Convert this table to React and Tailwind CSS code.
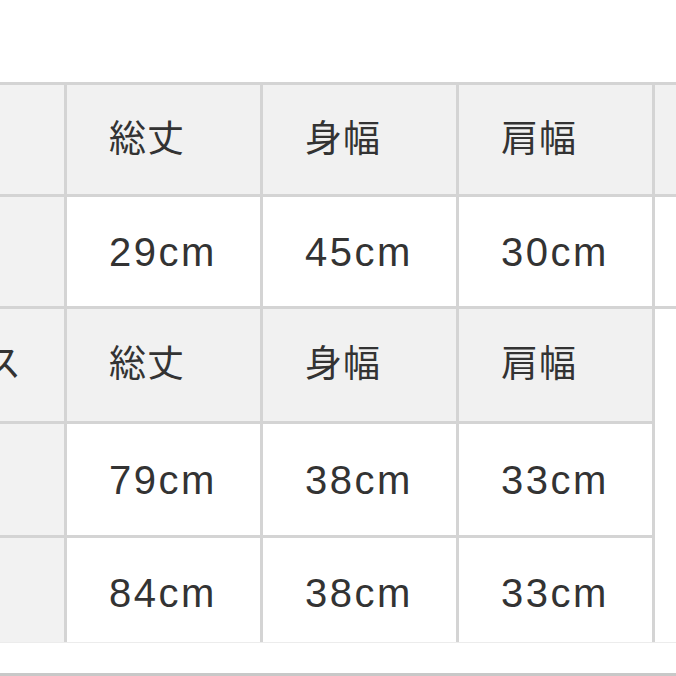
export default function App() {
  const font = { fontFamily: '"Liberation Sans", "Noto Sans CJK JP", sans-serif' };
  const Head = ({ children }) => (
    <div className="bg-[#f1f1f1] flex items-center pl-[42px] text-[37px] tracking-[1px] text-[#333] whitespace-nowrap">
      {children}
    </div>
  );
  const Body = ({ children, extra = "" }) => (
    <div className={`bg-white flex items-center pl-[42px] text-[40px] tracking-[2.5px] text-[#333] whitespace-nowrap ${extra}`}>
      {children}
    </div>
  );
  const Side = ({ children }) => (
    <div className="bg-[#f2f2f2] flex items-center justify-end pr-[43px] overflow-hidden text-[37px] text-[#333] whitespace-nowrap">
      {children}
    </div>
  );
  return (
    <div className="w-[676px] h-[676px] bg-white overflow-hidden" style={font}>
      <div className="h-[82px]" />
      <div className="grid grid-cols-[64px_193px_193px_193px_1fr] grid-rows-[109px_109px] gap-[3px] bg-[#d4d4d4] py-[3px]">
        <Side />
        <Head>総丈</Head>
        <Head>身幅</Head>
        <Head>肩幅</Head>
        <div className="bg-[#f1f1f1]" />
        <Side />
        <Body>29cm</Body>
        <Body>45cm</Body>
        <Body>30cm</Body>
        <div className="bg-white" />
      </div>
      <div className="flex">
        <div className="w-[655px] grid grid-cols-[64px_193px_193px_193px] grid-rows-[112px_111px_104px] gap-[3px] bg-[#d4d4d4] pr-[3px]">
          <Side>ワンピース</Side>
          <Head>総丈</Head>
          <Head>身幅</Head>
          <Head>肩幅</Head>
          <Side />
          <Body>79cm</Body>
          <Body>38cm</Body>
          <Body>33cm</Body>
          <Side />
          <Body extra="pt-[6px]">84cm</Body>
          <Body extra="pt-[6px]">38cm</Body>
          <Body extra="pt-[6px]">33cm</Body>
        </div>
        <div className="flex-1 bg-white" />
      </div>
      <div className="h-[1px] bg-[#ececec]" />
      <div className="h-[30px]" />
      <div className="h-[3px] bg-[#c8c8c8]" />
    </div>
  );
}
